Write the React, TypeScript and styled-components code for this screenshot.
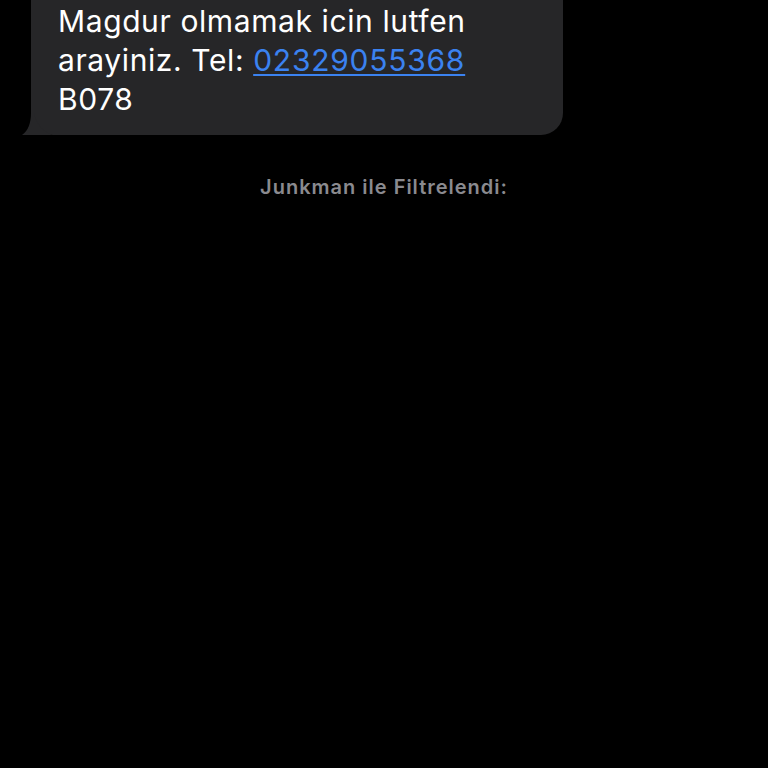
import React from "react";
import styled, { createGlobalStyle } from "styled-components";

const GlobalStyle = createGlobalStyle`
  html, body {
    margin: 0;
    padding: 0;
    background: #000;
  }
  body {
    font-family: Inter, "Noto Sans", sans-serif;
    -webkit-font-smoothing: antialiased;
  }
`;

const Screen = styled.div`
  width: 768px;
  height: 768px;
  overflow: hidden;
  background: #000;
  display: flex;
  flex-direction: column;
`;

const Row = styled.div`
  display: flex;
  padding-left: 31px;
`;

const Bubble = styled.div`
  position: relative;
  width: 532px;
  box-sizing: border-box;
  margin-top: -60px;
  padding: 62px 16px 16px 27px;
  background: #262628;
  border-radius: 22px;
  color: #fff;
  font-size: 30px;
  line-height: 39px;
  letter-spacing: 0.6px;
`;

const Tail = styled.svg`
  position: absolute;
  left: -9px;
  bottom: 0;
`;

const PhoneLink = styled.a`
  color: #3b82f0;
  text-decoration: underline;
  text-decoration-thickness: 2px;
  text-underline-offset: 3px;
  letter-spacing: 0.75px;
`;

const Caption = styled.div`
  margin-top: 40px;
  text-align: center;
  color: #8a8a8f;
  font-size: 20px;
  font-weight: 600;
  line-height: 24px;
  letter-spacing: 1px;
`;

export default function App() {
  return (
    <Screen>
      <GlobalStyle />
      <Row>
        <Bubble>
          <Tail width="30" height="22" viewBox="0 0 30 22">
            <path d="M9 0 L12 0 C14 10 20 18 30 22 L0 22 C6 18 9 10 9 0 Z" fill="#262628" />
          </Tail>
          Magdur olmamak icin lutfen
          <br />
          arayiniz. Tel: <PhoneLink href="#">02329055368</PhoneLink>
          <br />
          B078
        </Bubble>
      </Row>
      <Caption>Junkman ile Filtrelendi:</Caption>
    </Screen>
  );
}
